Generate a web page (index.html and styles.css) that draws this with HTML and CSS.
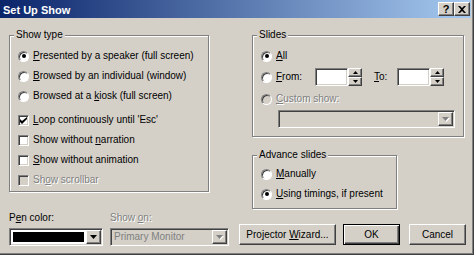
FILE: index.html
```html
<!DOCTYPE html>
<html>
<head>
<meta charset="utf-8">
<link rel="stylesheet" href="styles.css">
</head>
<body>
<div class="window">
  <div class="titlebar">
    <span class="title">Set Up Show</span>
    <div class="tb-buttons">
      <span class="tb-btn tb-help">?</span>
      <span class="tb-btn tb-close"><svg width="8" height="7" viewBox="0 0 8 7"><path d="M0 0h2l2 2 2-2h2L5 3.5 8 7H6L4 5 2 7H0l3-3.5z" fill="#000"/></svg></span>
    </div>
  </div>
  <div class="content">
    <div class="top">
      <div class="group g-showtype">
        <span class="legend">Show type</span>
        <div class="opts">
          <div class="row"><span class="radio on"></span><span class="lbl"><u>P</u>resented by a speaker (full screen)</span></div>
          <div class="row"><span class="radio"></span><span class="lbl"><u>B</u>rowsed by an individual (window)</span></div>
          <div class="row"><span class="radio"></span><span class="lbl">Browsed at a <u>k</u>iosk (full screen)</span></div>
        </div>
        <div class="opts checks">
          <div class="row"><span class="check"><svg width="7" height="7" viewBox="0 0 7 7"><path d="M0 2v3l2 2 5-5V-0L2 4z" fill="#000"/></svg></span><span class="lbl"><u>L</u>oop continuously until 'Esc'</span></div>
          <div class="row"><span class="check"></span><span class="lbl">Show without <u>n</u>arration</span></div>
          <div class="row"><span class="check"></span><span class="lbl"><u>S</u>how without animation</span></div>
          <div class="row"><span class="check disabled"></span><span class="lbl dis">Sh<u>o</u>w scrollbar</span></div>
        </div>
      </div>
      <div class="right">
        <div class="group g-slides">
          <span class="legend">Slides</span>
          <div class="row r1"><span class="radio on"></span><span class="lbl"><u>A</u>ll</span></div>
          <div class="row r2">
            <span class="radio"></span><span class="lbl from"><u>F</u>rom:</span>
            <span class="edit"></span><span class="spin"><span class="spin-btn"><svg width="5" height="3" viewBox="0 0 5 3"><path d="M2.5 0L5 3H0z" fill="#000"/></svg></span><span class="spin-btn"><svg width="5" height="3" viewBox="0 0 5 3"><path d="M0 0h5L2.5 3z" fill="#000"/></svg></span></span>
            <span class="lbl to"><u>T</u>o:</span>
            <span class="edit"></span><span class="spin"><span class="spin-btn"><svg width="5" height="3" viewBox="0 0 5 3"><path d="M2.5 0L5 3H0z" fill="#000"/></svg></span><span class="spin-btn"><svg width="5" height="3" viewBox="0 0 5 3"><path d="M0 0h5L2.5 3z" fill="#000"/></svg></span></span>
          </div>
          <div class="row r3"><span class="radio disabled"></span><span class="lbl dis"><u>C</u>ustom show:</span></div>
          <div class="combo disabled custom">
            <span class="combo-text"></span>
            <span class="dd-btn"><svg width="7" height="4" viewBox="0 0 7 4"><path d="M0 0h7L3.5 4z" fill="#808080"/></svg></span>
          </div>
        </div>
        <div class="group g-advance">
          <span class="legend">Advance slides</span>
          <div class="row"><span class="radio"></span><span class="lbl"><u>M</u>anually</span></div>
          <div class="row"><span class="radio on"></span><span class="lbl"><u>U</u>sing timings, if present</span></div>
        </div>
      </div>
    </div>
    <div class="bottom">
      <div class="field pen">
        <div class="flabel">P<u>e</u>n color:</div>
        <div class="combo">
          <span class="swatch"></span>
          <span class="dd-btn"><svg width="7" height="4" viewBox="0 0 7 4"><path d="M0 0h7L3.5 4z" fill="#000"/></svg></span>
        </div>
      </div>
      <div class="field showon">
        <div class="flabel dis">Show <u>o</u>n:</div>
        <div class="combo disabled">
          <span class="combo-text">Primary Monitor</span>
          <span class="dd-btn"><svg width="7" height="4" viewBox="0 0 7 4"><path d="M0 0h7L3.5 4z" fill="#808080"/></svg></span>
        </div>
      </div>
      <span class="btn projector"><span>Projector <u>W</u>izard...</span></span>
      <span class="btn ok default"><span>OK</span></span>
      <span class="btn cancel"><span>Cancel</span></span>
    </div>
  </div>
</div>
</body>
</html>
```

FILE: styles.css
```css
* { box-sizing: border-box; }
html, body { margin: 0; padding: 0; }
body {
  width: 474px;
  height: 255px;
  overflow: hidden;
  background: #d4d0c8;
  font-family: "Liberation Sans", Arial, sans-serif;
  font-size: 10px;
  color: #000;
}
u { text-decoration: underline; text-underline-offset: 1px; }

.window {
  width: 474px;
  height: 255px;
  padding-right: 3px;
  box-shadow: inset -1px -1px #404040, inset -2px -2px #808080;
  display: flex;
  flex-direction: column;
}

.titlebar {
  height: 18px;
  flex: none;
  background: linear-gradient(to right, #0a246a, #a6caf0);
  display: flex;
  align-items: flex-start;
  justify-content: space-between;
}
.title {
  color: #fff;
  font-weight: bold;
  font-size: 11px;
  line-height: 14px;
  padding: 3px 0 0 3px;
}
.tb-buttons {
  display: flex;
  padding: 2px 1px 0 0;
}
.tb-btn {
  width: 16px;
  height: 14px;
  background: #d4d0c8;
  border: 1px solid;
  border-color: #fff #404040 #404040 #fff;
  box-shadow: inset -1px -1px #808080;
  display: flex;
  align-items: center;
  justify-content: center;
  font-weight: bold;
  font-size: 11px;
  line-height: 12px;
}

.content {
  flex: 1;
  padding: 17px 0 0 9px;
}
.top {
  display: flex;
  align-items: flex-start;
}

.group {
  position: relative;
  border: 1px solid #808080;
  box-shadow: inset 1px 1px #fff, 1px 1px #fff;
}
.legend {
  position: absolute;
  top: -7px;
  left: 4px;
  padding: 0 2px;
  background: #d4d0c8;
  line-height: 12px;
  white-space: nowrap;
}

.row {
  display: flex;
  align-items: center;
  height: 20px;
  white-space: nowrap;
}
.lbl { margin-left: 4px; line-height: 12px; }
.dis { color: #808080; text-shadow: 1px 1px 0 #fff; }

.g-showtype {
  width: 200px;
  height: 157px;
  padding: 10px 8px 0;
}
.checks { margin-top: 4px; }

.right {
  margin-left: 43px;
  display: flex;
  flex-direction: column;
  gap: 18px;
}
.g-slides {
  width: 212px;
  height: 102px;
  padding: 10px 8px 0;
}
.g-slides .r2, .g-slides .r3 { height: 22px; }
.from { width: 39px; }
.to { width: 23px; margin-left: 12px; }
.g-advance {
  width: 145px;
  height: 54px;
  padding: 8px 8px 0;
}

.radio {
  width: 11px;
  height: 11px;
  flex: none;
  border-radius: 50%;
  background: #fff;
  border: 1px solid;
  border-color: #808080 #fff #fff #808080;
  box-shadow: inset 1px 1px #404040;
  display: flex;
  align-items: center;
  justify-content: center;
}
.radio.on::after {
  content: "";
  width: 4px;
  height: 4px;
  border-radius: 50%;
  background: #000;
}
.radio.disabled { background: #d4d0c8; }

.check {
  width: 11px;
  height: 11px;
  flex: none;
  background: #fff;
  border: 1px solid;
  border-color: #808080 #fff #fff #808080;
  box-shadow: inset 1px 1px #404040, inset -1px -1px #d4d0c8;
  display: flex;
  align-items: center;
  justify-content: center;
}
.check.disabled { background: #d4d0c8; }
.check svg { display: block; }

.edit, .combo {
  border: 1px solid;
  border-color: #808080 #fff #fff #808080;
  box-shadow: inset 1px 1px #404040, inset -1px -1px #d4d0c8;
}
.edit {
  width: 33px;
  height: 18px;
  background: #fff;
  flex: none;
}
.spin {
  width: 14px;
  height: 18px;
  display: flex;
  flex-direction: column;
  flex: none;
}
.spin-btn, .dd-btn, .btn {
  background: #d4d0c8;
  border: 1px solid;
  border-color: #fff #404040 #404040 #fff;
  box-shadow: inset -1px -1px #808080;
  display: flex;
  align-items: center;
  justify-content: center;
}
.spin-btn { height: 9px; }
.spin-btn svg, .dd-btn svg { display: block; }

.combo {
  display: flex;
  height: 18px;
  padding: 1px;
  background: #fff;
}
.combo.disabled { background: #d4d0c8; }
.combo.custom { width: 177px; margin-left: 17px; }
.combo-text {
  flex: 1;
  padding-left: 2px;
  line-height: 14px;
  color: #808080;
  white-space: nowrap;
  overflow: hidden;
}
.swatch {
  flex: 1;
  margin: 2px;
  background: #000;
}
.dd-btn { width: 15px; flex: none; }
.combo.disabled .dd-btn svg { filter: drop-shadow(1px 1px 0 #fff); }

.bottom {
  display: flex;
  align-items: flex-end;
  margin-top: 2px;
  white-space: nowrap;
}
.field { display: flex; flex-direction: column; }
.flabel { line-height: 13px; margin-bottom: 4px; }
.pen { width: 94px; }
.showon { width: 119px; margin-left: 7px; }

.btn {
  height: 21px;
  margin-bottom: 1px;
  line-height: 12px;
}
.projector { width: 97px; margin-left: 10px; }
.ok { width: 57px; margin-left: 7px; }
.cancel { width: 57px; margin-left: 9px; }
.btn.default {
  border-color: #000;
  box-shadow: inset 1px 1px #fff, inset -1px -1px #404040, inset -2px -2px #808080;
}
```
